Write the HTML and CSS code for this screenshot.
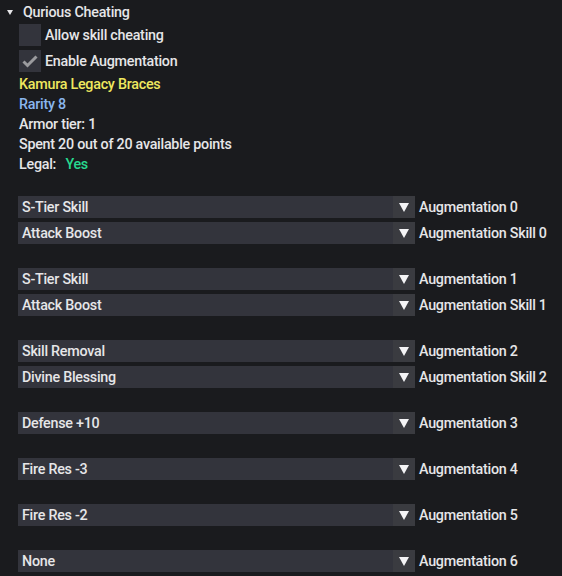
FILE: index.html
```html
<!DOCTYPE html>
<html>
<head>
<meta charset="utf-8">
<link rel="stylesheet" href="styles.css">
</head>
<body>
<div class="win">
  <div class="header"><span class="tri"></span><span>Qurious Cheating</span></div>
  <div class="body">
    <div class="check"><span class="box"></span><span>Allow skill cheating</span></div>
    <div class="check"><span class="box"><svg width="22" height="22" viewBox="0 0 22 22"><path d="M4.5 11.5 L8.5 15.5 L17.5 6.5" fill="none" stroke="#9b9b9e" stroke-width="3"/></svg></span><span>Enable Augmentation</span></div>
    <div class="line yellow">Kamura Legacy Braces</div>
    <div class="line blue">Rarity 8</div>
    <div class="line">Armor tier: 1</div>
    <div class="line">Spent 20 out of 20 available points</div>
    <div class="line">Legal: <span class="green">Yes</span></div>
    <div class="line"></div>

    <div class="row"><div class="combo"><span class="val">S-Tier Skill</span><span class="arrow"></span></div><span class="lbl">Augmentation 0</span></div>
    <div class="row"><div class="combo"><span class="val">Attack Boost</span><span class="arrow"></span></div><span class="lbl">Augmentation Skill 0</span></div>
    <div class="line"></div>
    <div class="row"><div class="combo"><span class="val">S-Tier Skill</span><span class="arrow"></span></div><span class="lbl">Augmentation 1</span></div>
    <div class="row"><div class="combo"><span class="val">Attack Boost</span><span class="arrow"></span></div><span class="lbl">Augmentation Skill 1</span></div>
    <div class="line"></div>
    <div class="row"><div class="combo"><span class="val">Skill Removal</span><span class="arrow"></span></div><span class="lbl">Augmentation 2</span></div>
    <div class="row"><div class="combo"><span class="val">Divine Blessing</span><span class="arrow"></span></div><span class="lbl">Augmentation Skill 2</span></div>
    <div class="line"></div>
    <div class="row"><div class="combo"><span class="val">Defense +10</span><span class="arrow"></span></div><span class="lbl">Augmentation 3</span></div>
    <div class="line"></div>
    <div class="row"><div class="combo"><span class="val">Fire Res -3</span><span class="arrow"></span></div><span class="lbl">Augmentation 4</span></div>
    <div class="line"></div>
    <div class="row"><div class="combo"><span class="val">Fire Res -2</span><span class="arrow"></span></div><span class="lbl">Augmentation 5</span></div>
    <div class="line"></div>
    <div class="row"><div class="combo"><span class="val">None</span><span class="arrow"></span></div><span class="lbl">Augmentation 6</span></div>
  </div>
</div>
</body>
</html>
```

FILE: styles.css
```css
html, body {
  margin: 0;
  padding: 0;
  background: #1a1b1e;
  width: 562px;
  height: 576px;
  overflow: hidden;
}
.win {
  font-family: Roboto, "Liberation Sans", sans-serif;
  font-weight: 500;
  font-size: 14.3px;
  letter-spacing: -0.25px;
  color: #e6e6e8;
  display: flex;
  flex-direction: column;
}
.header {
  height: 20px;
  margin-top: 2px;
  display: flex;
  align-items: center;
  padding-left: 7px;
  gap: 10px;
  margin-bottom: 2px;
}
.header span:last-child {
  line-height: 20px;
}
.tri {
  width: 0;
  height: 0;
  border-left: 3px solid transparent;
  border-right: 3px solid transparent;
  border-top: 5px solid #e6e6e8;
}
.body {
  padding-left: 19px;
  display: flex;
  flex-direction: column;
  gap: 4px;
}
.check {
  height: 22px;
  display: flex;
  align-items: center;
  gap: 4px;
  line-height: 23px;
}
.box {
  width: 22px;
  height: 22px;
  background: #33343c;
  display: block;
}
.box svg { display: block; }
.line {
  height: 16px;
  line-height: 17px;
  white-space: nowrap;
}
.yellow { color: #efe85e; }
.blue { color: #8ab6ee; }
.green { color: #27d98f; margin-left: 6px; }
.row {
  height: 22px;
  display: flex;
  align-items: center;
  gap: 4px;
  margin-left: -1px;
}
.combo {
  width: 397px;
  height: 22px;
  display: flex;
  background: #33343c;
}
.val {
  flex: 1;
  line-height: 23px;
  padding-left: 4px;
  white-space: nowrap;
}
.arrow {
  width: 22px;
  height: 22px;
  background: #3a3b40;
  position: relative;
}
.arrow::after {
  content: "";
  position: absolute;
  left: 6px;
  top: 7px;
  width: 0;
  height: 0;
  border-left: 5px solid transparent;
  border-right: 5px solid transparent;
  border-top: 9px solid #f4f4f6;
}
.lbl {
  white-space: nowrap;
  line-height: 23px;
}
```
